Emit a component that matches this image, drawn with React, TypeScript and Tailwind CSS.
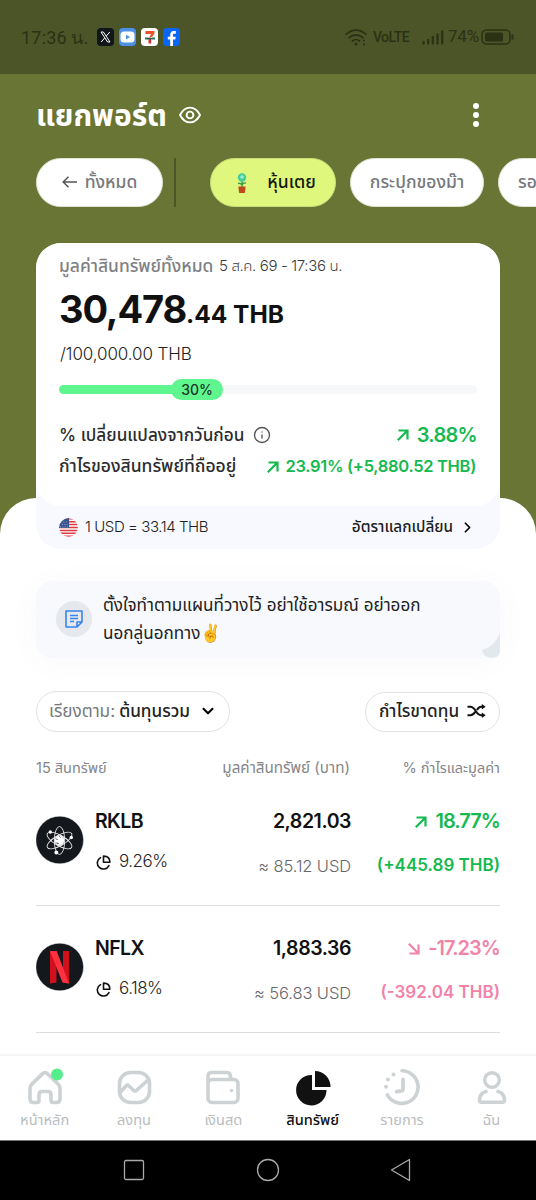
import type { ReactNode } from "react";
import { ChevronDown, ChevronRight, Info } from "lucide-react";

interface Asset {
    symbol: string;
    share: string;
    value: string;
    usd: string;
    percent: string;
    profit: string;
    up: boolean;
    logo: ReactNode;
}

const RocketLabLogo = () => (
    <svg viewBox="0 0 48 48" className="size-12" fill="none" stroke="#e8eaec" strokeWidth="0.9">
        <circle cx="23.700" cy="24" r="23.800" fill="#14171b" stroke="#dfe3e5" strokeWidth="0.500" />
        <ellipse cx="23.500" cy="24.500" rx="5.200" ry="14" />
        <ellipse cx="23.500" cy="24.500" rx="5.200" ry="14" transform="rotate(60 23.500 24.500)" />
        <ellipse cx="23.500" cy="24.500" rx="5.200" ry="14" transform="rotate(120 23.500 24.500)" />
        <circle cx="23.500" cy="24.500" r="4.800" fill="#fff" />
        <path d="M20 22.500l1.500 1.500M20.500 27l2 .5M23.500 20.500l1 1" stroke="#14171b" />
        <circle cx="14.300" cy="16" r="1.700" fill="#fff" stroke="none" />
        <circle cx="35.300" cy="21.500" r="1.700" fill="#fff" stroke="none" />
        <circle cx="20.300" cy="36.500" r="1.900" fill="#fff" stroke="none" />
    </svg>
);

const NetflixLogo = () => (
    <svg viewBox="0 0 48 48" className="size-12">
        <circle cx="23.700" cy="24" r="23.800" fill="#14171b" stroke="#dfe3e5" strokeWidth="0.500" />
        <path d="M14 8h6.500v31.500L14 40.500z" fill="#d0101d" />
        <path d="M27 8h6v32.500l-6-1z" fill="#d0101d" />
        <path d="M14 8h6.700L33 40.500l-6.500-1z" fill="#ff3040" />
    </svg>
);

const assets: Asset[] = [
    {
        symbol: "RKLB",
        share: "9.26%",
        value: "2,821.03",
        usd: "≈ 85.12 USD",
        percent: "18.77%",
        profit: "(+445.89 THB)",
        up: true,
        logo: <RocketLabLogo />,
    },
    {
        symbol: "NFLX",
        share: "6.18%",
        value: "1,883.36",
        usd: "≈ 56.83 USD",
        percent: "-17.23%",
        profit: "(-392.04 THB)",
        up: false,
        logo: <NetflixLogo />,
    },
];

const TrendArrow = ({ up = true }: { up?: boolean }) => (
    <svg viewBox="0 0 12 12" className="mt-[1px] size-3 shrink-0" fill="none" stroke="currentColor" strokeWidth="2.200">
        {up ? <path d="M1.500 1.500h9v9M10.500 1.500L.8 11.200" /> : <path d="M1.500 10.500h9v-9M10.500 10.500L.8.8" />}
    </svg>
);

const StatusBar = () => (
    <div className="flex h-[74px] items-center bg-[#4c5527] pl-[21px] pr-[22px] text-[#2b3115]">
        <span className="w-[76px] whitespace-nowrap font-['Roboto'] text-[18px] tracking-[0.2px]">17:36 น.</span>
        <div className="flex gap-[5px]">
            {/* X */}
            <svg viewBox="0 0 17 18" className="h-[18px] w-[17px]">
                <rect width="17" height="18" rx="4" fill="#10161a" />
                <path d="M4 4h2.400l6.600 10h-2.400zM12.800 4L9.300 8M7.600 10L4.200 14" fill="none" stroke="#fff" strokeWidth="1" />
            </svg>
            {/* Video */}
            <svg viewBox="0 0 17 18" className="h-[18px] w-[17px]">
                <rect width="17" height="18" rx="4" fill="#4b92e6" />
                <rect x="1.500" y="3.500" width="14" height="11" rx="3.500" fill="#fff" />
                <path d="M7 6.800l4.200 2.300L7 11.400z" fill="#4b92e6" />
            </svg>
            {/* Store */}
            <svg viewBox="0 0 17 18" className="h-[18px] w-[17px]">
                <rect width="17" height="18" rx="4" fill="#fff" />
                <path d="M4.500 3h9v2.500L11 9H8.500l1.500-3H4.500z" fill="#e8542b" />
                <path d="M4 9.500h3v2H4zM11 9.500h3v2h-3z" fill="#1b7a55" />
                <path d="M7.500 9.500h2.700v6H7.500z" fill="#d92b2b" />
                <path d="M6.500 10h4.500v1.300H6.500z" fill="#1b5a48" />
            </svg>
            {/* Facebook */}
            <svg viewBox="0 0 17 18" className="h-[18px] w-[17px]">
                <rect width="17" height="18" rx="4" fill="#0a66f5" />
                <path d="M7.200 18v-6.500H4.800V8.700h2.400V7c0-2.600 1.400-3.900 3.700-3.900h1.900v2.600h-1.400c-1 0-1.400.5-1.400 1.400v1.600h2.700l-.4 2.800H10V18z" fill="#fff" />
            </svg>
        </div>
        <div className="ml-auto flex items-center">
            <svg viewBox="0 0 22 17" className="mr-[6px] h-[17px] w-[22px]" fill="none" stroke="currentColor" strokeWidth="1.800" strokeLinecap="round">
                <path d="M1.200 5.200C7-.2 15-.2 20.800 5.200M4.200 8.700c4-3.600 9.600-3.600 13.600 0M7.500 12c2-1.900 5-1.900 7 0" />
                <circle cx="11" cy="15" r="0.700" fill="currentColor" />
                <path d="M19 11.500v.1M19 15.300v.1" strokeWidth="2" />
            </svg>
            <span className="mr-[14px] w-[35px] whitespace-nowrap font-['Roboto'] text-[14px] font-medium tracking-[-0.6px]">VoLTE</span>
            <svg viewBox="0 0 22 15" className="mr-[4px] h-[15px] w-[22px]" stroke="currentColor" strokeWidth="2.300" strokeLinecap="round">
                <path d="M1.500 12v1.500M6.200 10v3.500M10.800 7v6.500M15.500 4.500v9M20.200 1.500v12" />
            </svg>
            <span className="w-[33px] whitespace-nowrap font-['Roboto'] text-[17px] tracking-[-0.2px]">74%</span>
            <svg viewBox="0 0 33 16" className="h-[16px] w-[33px]" fill="none" stroke="currentColor" strokeWidth="1.500">
                <rect x="1" y="1" width="28" height="14" rx="4.500" />
                <rect x="4" y="3.500" width="18" height="9" rx="1.500" fill="currentColor" stroke="none" />
                <path d="M31.500 5.500v5" strokeWidth="2" />
            </svg>
        </div>
    </div>
);

const Header = () => (
    <>
        <div className="flex h-[84px] items-center pb-[2px] pl-[36px] pr-[57px] text-white">
            <h1 className="w-[130px] whitespace-nowrap text-[30px] font-bold">แยกพอร์ต</h1>
            <svg viewBox="0 0 22 18" className="ml-[13px] h-[18px] w-[22px]" fill="none" stroke="#fff" strokeWidth="1.900">
                <path d="M1 9C6-.8 16-.8 21 9 16 18.800 6 18.800 1 9z" strokeLinejoin="round" />
                <circle cx="11" cy="9" r="3.400" />
            </svg>
            <div className="ml-auto flex flex-col gap-[3px]">
                <span className="size-[6px] rounded-full bg-white" />
                <span className="size-[6px] rounded-full bg-white" />
                <span className="size-[6px] rounded-full bg-white" />
            </div>
        </div>
        <div className="flex h-[49px] items-center overflow-hidden pl-[36px] text-[17.5px] font-medium text-[#77787c]">
            <div className="flex h-[49px] w-[127px] shrink-0 items-center justify-center gap-[8px] rounded-full border border-[#dfe3d2] bg-white pb-[1px]">
                <svg viewBox="0 0 15 12" className="h-[12px] w-[15px]" fill="none" stroke="#555" strokeWidth="1.500">
                    <path d="M15 6H1.200M6.500 .7L1.200 6l5.300 5.300" />
                </svg>
                <span>ทั้งหมด</span>
            </div>
            <div className="ml-[11px] h-full w-[2px] shrink-0 bg-[#4c5527]" />
            <div className="ml-[34px] flex h-[49px] w-[126px] shrink-0 items-center justify-center gap-[19px] rounded-full border border-[#cbdd7b] bg-[#def77c] pl-[6px] text-[#15180c]">
                <svg viewBox="0 0 12 20" className="h-[20px] w-[12px]">
                    <path d="M6 8v6M6 12c-1.500-1.800-2.500-2-4-1.500M6 12c1-2 2.500-2.300 4-2" stroke="#3c9a4b" strokeWidth="1.400" fill="none" />
                    <circle cx="6" cy="4.500" r="4.200" fill="#43cd9a" />
                    <circle cx="6" cy="4" r="1.800" fill="#9df0d5" />
                    <path d="M2.500 13.500h7v2l-.7 4.500H3.200l-.7-4.500z" fill="#c1481d" />
                </svg>
                <span>หุ้นเตย</span>
            </div>
            <div className="ml-[14px] flex h-[49px] w-[134px] shrink-0 items-center justify-center rounded-full border border-[#dfe3d2] bg-white">
                กระปุกของม๊า
            </div>
            <div className="ml-[14px] flex h-[49px] w-[134px] shrink-0 items-center rounded-full border border-[#dfe3d2] bg-white pl-[19px]">
                รอ
            </div>
        </div>
    </>
);

const Flag = () => (
    <svg viewBox="0 0 19 19" className="size-[19px]">
        <clipPath id="flag">
            <circle cx="9.500" cy="9.500" r="9.300" />
        </clipPath>
        <g clipPath="url(#flag)">
            <rect width="19" height="19" fill="#fff" />
            <path d="M0 .8h19M0 3.700h19M0 6.600h19M0 9.500h19M0 12.400h19M0 15.300h19M0 18.200h19" stroke="#e0383f" strokeWidth="1.500" />
            <rect width="10" height="10" fill="#35528f" />
            <path d="M2 4h7M3 6.500h6M1 9h8" stroke="#b8c6e4" strokeWidth="0.800" strokeDasharray="1 1.300" />
        </g>
    </svg>
);

const SummaryCard = () => (
    <div className="relative z-10 mx-[36px] -mb-[51px] mt-[36px] h-[306px] rounded-[25px] bg-[#f8f9fe]">
        <div className="h-[263px] rounded-[25px] bg-white px-[23px] pt-[10px]">
            <div className="flex h-[26px] items-center whitespace-nowrap">
                <span className="w-[160px] text-[17.4px] font-medium text-[#808184]">มูลค่าสินทรัพย์ทั้งหมด</span>
                <span className="text-[15px] font-light tracking-[-0.37px] text-[#3a3b3e]">5 ส.ค. 69 - 17:36 น.</span>
            </div>
            <div className="mt-[1px] flex h-[58px] items-baseline whitespace-nowrap font-bold text-[#111]">
                <span className="w-[127px] text-[38px] leading-[58px] tracking-[-1.1px]">30,478</span>
                <span className="text-[24.5px]">.44 THB</span>
            </div>
            <div className="flex h-[30px] items-center pl-[1px] pt-[3px] text-[17px] font-light tracking-[-0.1px] text-[#222]">/100,000.00 THB</div>
            <div className="mt-[11px] flex h-[21px] items-center">
                <div className="h-[9px] w-[118px] rounded-l-full bg-[#5ff58f]" />
                <div className="-ml-[6px] flex h-[21px] w-[52px] items-center justify-center rounded-full bg-[#5ff58f] text-[14px] font-medium text-[#1c3524]">30%</div>
                <div className="h-[9px] flex-1 rounded-r-full bg-[#f6f8fa]" />
            </div>
            <div className="mt-[18px] flex h-[33px] items-center whitespace-nowrap">
                <span className="w-[185px] text-[17.2px] font-medium text-[#2b2c2e]">% เปลี่ยนแปลงจากวันก่อน</span>
                <Info size={18} strokeWidth={1.8} color="#555" className="ml-[9px]" />
                <div className="ml-auto flex items-center gap-[8px] text-[20px] font-semibold tracking-[-0.7px] text-[#16b950]">
                    <TrendArrow />
                    3.88%
                </div>
            </div>
            <div className="flex h-[30px] items-center whitespace-nowrap">
                <span className="text-[17.5px] font-medium text-[#2b2c2e]">กำไรของสินทรัพย์ที่ถืออยู่</span>
                <div className="ml-auto mr-[1px] flex items-center gap-[7px] text-[16.5px] font-semibold tracking-[-0.32px] text-[#16b950]">
                    <TrendArrow />
                    23.91% (+5,880.52 THB)
                </div>
            </div>
        </div>
        <div className="flex h-[42px] items-center whitespace-nowrap px-[23px] text-[15px]">
            <Flag />
            <span className="ml-[7px] font-light tracking-[-0.43px] text-[#222]">1 USD = 33.14 THB</span>
            <span className="ml-auto text-[15.3px] font-medium text-[#1b1c1e]">อัตราแลกเปลี่ยน</span>
            <ChevronRight size={17} strokeWidth={2.4} className="ml-[6px] mr-[1px]" />
        </div>
    </div>
);

const NoteCard = () => (
    <div className="relative flex h-[77px] rounded-[16px] bg-[#f8f9fd] pl-[20px] shadow-[0_4px_30px_rgba(140,90,110,0.04)]">
        <div className="mt-[20px] flex size-[36px] items-center justify-center rounded-full bg-[#e5e9ed]">
            <svg viewBox="0 0 18 18" className="size-[18px]" fill="none" stroke="#3a83ec" strokeWidth="1.600" strokeLinejoin="round">
                <path d="M1 1h16v11l-5 5H1zM12 17v-5h5M5 5.500h8M5 8.500h8M5 11.500h4" />
            </svg>
        </div>
        <p className="ml-[11px] mt-[10px] whitespace-nowrap text-[17.1px] leading-[28px] text-[#202124]">
            ตั้งใจทำตามแผนที่วางไว้ อย่าใช้อารมณ์ อย่าออก
            <br />
            นอกลู่นอกทาง✌️
        </p>
        <svg viewBox="0 0 18 26" className="absolute bottom-0 right-0 h-[26px] w-[18px]">
            <path d="M18 0v18c0 5-3 8-8 8-5 0-9-3-10-8 10-3 15-9 18-18z" fill="#e3e8ec" />
        </svg>
    </div>
);

const AssetRow = ({ asset }: { asset: Asset }) => (
    <div className="flex h-[127px] border-b border-[#dcdcde] whitespace-nowrap">
        <div className="mt-[37px] size-12">{asset.logo}</div>
        <div className="ml-[11px] mt-[28px]">
            <div className="flex h-[30px] items-center text-[19.5px] font-semibold tracking-[-0.6px] text-[#111]">{asset.symbol}</div>
            <div className="mt-[10px] flex h-[30px] items-center text-[17px] font-light tracking-[-0.5px] text-[#222]">
                <svg viewBox="0 0 16 16" className="ml-[1px] mr-[8px] mt-[1px] size-[15px]" fill="none" stroke="#111" strokeWidth="1.700" strokeLinejoin="round" strokeLinecap="round">
                    <path d="M8 1.200v6.500h6.800C14.800 3.500 12 1.200 8 1.200z" />
                    <path d="M4.800 2.800a6.500 6.500 0 1 0 9 8.500" />
                </svg>
                {asset.share}
            </div>
        </div>
        <div className="ml-auto mt-[28px] flex flex-col items-end">
            <div className="flex h-[30px] items-center text-[19.5px] font-semibold tracking-[-0.45px] text-[#111]">{asset.value}</div>
            <div className="mt-[14px] flex h-[30px] items-center text-[16.5px] font-light tracking-[-0.1px] text-[#66676b]">{asset.usd}</div>
        </div>
        <div className={`mt-[27px] flex w-[149px] flex-col items-end font-semibold ${asset.up ? "text-[#16b950]" : "text-[#f283a8]"}`}>
            <div className="flex h-[30px] items-center gap-[8px] text-[20px] tracking-[-0.95px]">
                <TrendArrow up={asset.up} />
                {asset.percent}
            </div>
            <div className="mt-[15px] flex h-[30px] items-center text-[17px]">{asset.profit}</div>
        </div>
    </div>
);

const NavItem = ({ label, active, children }: { label: string; active?: boolean; children: ReactNode }) => (
    <div className={`flex flex-1 flex-col items-center whitespace-nowrap pt-[12px] text-[14.6px] ${active ? "font-medium text-[#111]" : "text-[#b9bdc0]"}`}>
        <svg viewBox="0 0 38 38" className="size-[38px]" fill="none" stroke="#cdd2d4" strokeWidth="3.600" strokeLinecap="round" strokeLinejoin="round">
            {children}
        </svg>
        <span className="leading-[28px]">{label}</span>
    </div>
);

const TabBar = () => (
    <div className="flex h-[86px] shrink-0 border-t-2 border-[#f6f6f7] bg-white">
        <NavItem label="หน้าหลัก">
            <path d="M19 4.500c1 0 1.700.5 2.300 1.100L32.500 16.500c1 1 1.500 2 1.500 3.500v11c0 2.500-1 3.500-3.500 3.500h-3.500c-1.500 0-2-.8-2-2V27c0-2.500-1-3.500-3-3.500h-6c-2 0-3 1-3 3.500v5.500c0 1.200-.5 2-2 2H7.500c-2.500 0-3.500-1-3.500-3.500V20c0-1.500.5-2.500 1.500-3.500L16.700 5.600c.6-.6 1.300-1.100 2.300-1.100z" />
            <circle cx="31" cy="6.500" r="6" fill="#55ee8a" stroke="none" />
        </NavItem>
        <NavItem label="ลงทุน">
            <rect x="4.500" y="4.500" width="30" height="30" rx="11" />
            <path d="M5.500 24l5.500-6c1-1 2-1 3 0l4.500 4.300c1 .9 2 .9 3 0L33 12" />
        </NavItem>
        <NavItem label="เงินสด">
            <rect x="4" y="11.500" width="30" height="23" rx="4" />
            <path d="M4 15V8.500c0-3 1-4 4-4h14.500c2.500 0 4 1.500 4 4v3" />
            <circle cx="27.500" cy="22.500" r="1.700" fill="#cdd2d4" stroke="none" />
        </NavItem>
        <NavItem label="สินทรัพย์" active>
            <path d="M18 7v15h14.500A15.200 15.200 0 1 1 18 7z" fill="#111" stroke="none" />
            <path d="M21 3A15.500 15.500 0 0 1 36.500 19H21z" fill="#111" stroke="none" />
        </NavItem>
        <NavItem label="รายการ">
            <path d="M19 2.800a16.300 16.300 0 1 1-14.600 24" />
            <path d="M20 11.500v9.500c0 1-.5 1.600-1.500 1.800l-4.800.8" strokeWidth="3.800" />
            <path d="M10.500 6.500v.1M5 11.500v.1M3 18.700v.1" strokeWidth="4" />
        </NavItem>
        <NavItem label="ฉัน">
            <circle cx="20" cy="12" r="7.300" />
            <path d="M14 23.500c-4 .8-6 3.500-6.500 8-.2 1.800.6 2.700 2.200 2.700h20.600c1.600 0 2.400-.9 2.200-2.700-.5-4.500-2.500-7.200-6.500-8" />
        </NavItem>
    </div>
);

const SystemNav = () => (
    <div className="flex h-[60px] shrink-0 items-center justify-center gap-[110px] border-t border-[#777] bg-black pb-[2px]">
        <svg viewBox="0 0 24 24" className="size-6" fill="none" stroke="#aaa" strokeWidth="1.300">
            <rect x="2.500" y="2.500" width="19" height="19" rx="1.500" />
        </svg>
        <svg viewBox="0 0 24 24" className="size-6" fill="none" stroke="#aaa" strokeWidth="1.300">
            <circle cx="12" cy="12" r="10.500" />
        </svg>
        <svg viewBox="0 0 24 24" className="size-6" fill="none" stroke="#aaa" strokeWidth="1.300" strokeLinejoin="round">
            <path d="M19.500 1.500v21L1.500 12z" />
        </svg>
    </div>
);

const App = () => (
    <div className="flex h-[1200px] w-[536px] flex-col overflow-hidden bg-[#687534] font-[Inter,'Noto_Sans_Thai',sans-serif]">
        <StatusBar />
        <Header />
        <SummaryCard />
        <div className="min-h-0 flex-1 overflow-hidden rounded-t-[36px] bg-white px-[36px] pt-[83px]">
            <NoteCard />
            <div className="mt-[33px] flex items-center justify-between whitespace-nowrap text-[17.2px]">
                <div className="flex h-[41px] w-[194px] items-center justify-center rounded-full border-[1.5px] border-[#e2e2e4] pb-[1px]">
                    <span className="text-[#77787c]">เรียงตาม:</span>
                    <span className="ml-[4px] font-medium text-[#222]">ต้นทุนรวม</span>
                    <ChevronDown size={18} strokeWidth={2.7} className="ml-[9px]" />
                </div>
                <div className="flex h-[40px] w-[135px] items-center justify-center gap-[8px] rounded-full border-[1.5px] border-[#e2e2e4] pb-[1px] font-medium text-[#222]">
                    กำไรขาดทุน
                    <svg viewBox="0 0 19 14" className="h-[14px] w-[19px]" fill="none" stroke="#111" strokeWidth="2">
                        <path d="M.5 2.800h3C8.500 2.800 9 11.200 14 11.200h2M.5 11.200h3c2.300 0 3.600-1.600 4.700-3.300M10 6c1-1.700 2-3.200 4-3.200h2" />
                        <path d="M14.800 0l3.900 2.800-3.900 2.800zM14.800 8.400l3.900 2.800-3.900 2.800z" fill="#111" stroke="none" />
                    </svg>
                </div>
            </div>
            <div className="mt-[21px] flex h-[30px] items-center whitespace-nowrap text-[14.500px] text-[#85868a]">
                <span>15 สินทรัพย์</span>
                <span className="ml-auto text-[15.2px]">มูลค่าสินทรัพย์ (บาท)</span>
                <span className="w-[150px] text-right">% กำไรและมูลค่า</span>
            </div>
            <div className="-mt-[4px]">
                {assets.map((asset) => (
                    <AssetRow key={asset.symbol} asset={asset} />
                ))}
            </div>
        </div>
        <TabBar />
        <SystemNav />
    </div>
);

export default App;
